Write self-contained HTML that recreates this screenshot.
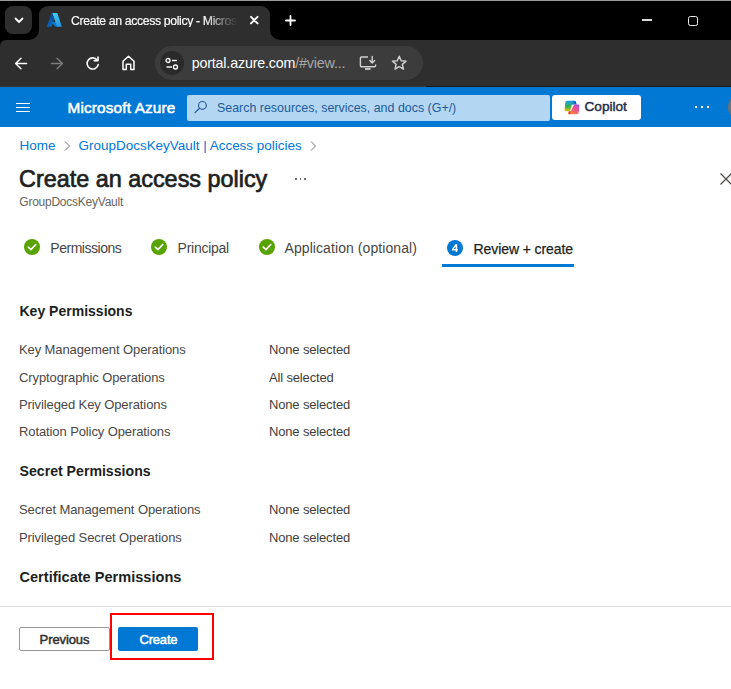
<!DOCTYPE html>
<html>
<head>
<meta charset="utf-8">
<style>
*{margin:0;padding:0;box-sizing:border-box;}
html,body{width:731px;height:689px;overflow:hidden;background:#fff;font-family:"Liberation Sans",sans-serif;}
.a{position:absolute;white-space:nowrap;line-height:1;}
#top{position:absolute;left:0;top:0;width:731px;height:1px;background:#9a9a9a;}
#strip{position:absolute;left:0;top:1px;width:731px;height:50px;background:#000;}
#toolbar{position:absolute;left:0;top:40px;width:731px;height:47px;background:#2e2e2e;border-top-left-radius:6px;}
#azbar{position:absolute;left:0;top:87px;width:731px;height:40px;background:#0078d4;}
</style>
</head>
<body>
<div id="top"></div>
<div id="strip"></div>
<!-- tab dropdown button -->
<div class="a" style="left:5px;top:6px;width:27px;height:28px;border-radius:8px;background:#2e2e2e;"></div>
<svg class="a" style="left:12px;top:14px" width="14" height="12" viewBox="0 0 14 12"><path d="M3.5 4.5 L7 8 L10.5 4.5" fill="none" stroke="#fff" stroke-width="1.8" stroke-linecap="round" stroke-linejoin="round"/></svg>
<!-- active tab -->
<div class="a" style="left:39px;top:6px;width:231px;height:40px;border-radius:9px 9px 0 0;background:#2e2e2e;"></div>
<!-- tab feet -->
<svg class="a" style="left:29px;top:30px" width="10" height="10" viewBox="0 0 10 10"><path d="M0 10 L10 10 L10 0 A10 10 0 0 1 0 10Z" fill="#2e2e2e"/></svg>
<svg class="a" style="left:270px;top:30px" width="10" height="10" viewBox="0 0 10 10"><path d="M0 0 L0 10 L10 10 A10 10 0 0 1 0 0Z" fill="#2e2e2e"/></svg>
<!-- azure logo -->
<svg class="a" style="left:47.3px;top:12.8px" width="14.7" height="13.9" viewBox="4 6.5 88 83">
<defs>
<linearGradient id="az1" x1="42.8" y1="12.7" x2="15.8" y2="92.6" gradientUnits="userSpaceOnUse"><stop offset="0" stop-color="#114a8b"/><stop offset="1" stop-color="#0669bc"/></linearGradient>
<linearGradient id="az3" x1="47.8" y1="10.4" x2="77.5" y2="89.4" gradientUnits="userSpaceOnUse"><stop offset="0" stop-color="#3ccbf4"/><stop offset="1" stop-color="#2892df"/></linearGradient>
</defs>
<path d="M33.338 6.544h26.038l-27.03 80.087a4.152 4.152 0 0 1-3.933 2.824H8.149a4.145 4.145 0 0 1-3.928-5.47L29.404 9.368a4.152 4.152 0 0 1 3.934-2.825z" fill="url(#az1)"/>
<path d="M71.175 60.261h-41.29a1.911 1.911 0 0 0-1.305 3.309l26.532 24.764a4.171 4.171 0 0 0 2.846 1.121h23.38z" fill="#0078d4"/>
<path d="M66.595 9.364a4.145 4.145 0 0 0-3.928-2.82H33.648a4.146 4.146 0 0 1 3.928 2.82l25.184 74.62a4.146 4.146 0 0 1-3.928 5.472h29.02a4.146 4.146 0 0 0 3.927-5.472z" fill="url(#az3)"/>
</svg>
<div class="a" style="left:71px;top:15px;font-size:12.3px;letter-spacing:-0.37px;color:#fff;-webkit-text-stroke:0.15px #fff;width:167px;overflow:hidden;-webkit-mask-image:linear-gradient(to right,#000 80%,rgba(0,0,0,0.35) 92%,transparent 100%);">Create an access policy - Microsoft Azure</div>
<!-- tab close -->
<svg class="a" style="left:248px;top:14px" width="12" height="12" viewBox="0 0 12 12"><path d="M3 2.8 L9.6 9.4 M9.6 2.8 L3 9.4" stroke="#fff" stroke-width="1.9" stroke-linecap="round"/></svg>
<!-- new tab plus -->
<svg class="a" style="left:283.8px;top:13.6px" width="13" height="13" viewBox="0 0 13 13"><path d="M6.5 2 V11 M2 6.5 H11" stroke="#fff" stroke-width="1.8" stroke-linecap="round"/></svg>
<!-- window controls -->
<div class="a" style="left:642px;top:19.2px;width:10px;height:1.6px;background:#d8d8d8;"></div>
<div class="a" style="left:688px;top:15.5px;width:10px;height:10.3px;border:1.5px solid #ececec;border-radius:2.5px;"></div>

<div id="toolbar"></div>
<!-- nav icons -->
<svg class="a" style="left:13px;top:56px" width="16" height="15" viewBox="0 0 16 15"><path d="M13.6 7.5 H2.6 M8 2.3 L2.6 7.5 L8 12.7" fill="none" stroke="#fff" stroke-width="1.5" stroke-linecap="round" stroke-linejoin="round"/></svg>
<svg class="a" style="left:49px;top:56px" width="16" height="15" viewBox="0 0 16 15"><path d="M2.4 7.5 H13.4 M8 2.3 L13.4 7.5 L8 12.7" fill="none" stroke="#7b7b7b" stroke-width="1.5" stroke-linecap="round" stroke-linejoin="round"/></svg>
<svg class="a" style="left:85px;top:56px" width="16" height="15" viewBox="0 0 16 15"><path d="M12.3 4.2 A5.6 5.6 0 1 0 13.2 8.6" fill="none" stroke="#fff" stroke-width="1.6" stroke-linecap="round"/><path d="M9.2 4.6 H13 V1" fill="none" stroke="#fff" stroke-width="1.6" stroke-linecap="round" stroke-linejoin="round"/></svg>
<svg class="a" style="left:121px;top:55px" width="15" height="16" viewBox="0 0 15 16"><path d="M2 6.3 L7.5 1.3 L13 6.3 V14.4 H9.7 V9.2 H5.3 V14.4 H2 Z" fill="none" stroke="#fff" stroke-width="1.5" stroke-linejoin="round"/></svg>
<!-- address pill -->
<div class="a" style="left:155px;top:46px;width:268px;height:34px;border-radius:17px;background:#3c3c3c;"></div>
<div class="a" style="left:160px;top:51px;width:24px;height:24px;border-radius:12px;background:#2a2a2a;"></div>
<svg class="a" style="left:164px;top:55.5px" width="16" height="16" viewBox="0 0 16 16"><circle cx="4" cy="4.5" r="2" fill="none" stroke="#fff" stroke-width="1.3"/><path d="M8 4.5 H13" stroke="#fff" stroke-width="1.4"/><circle cx="11.5" cy="11" r="2" fill="none" stroke="#fff" stroke-width="1.3"/><path d="M2.5 11 H8" stroke="#fff" stroke-width="1.4"/></svg>
<div class="a" style="left:191.7px;top:56px;font-size:14.3px;letter-spacing:-0.18px;color:#fff;">portal.azure.com<span style="color:#a8a8a8">/#view...</span></div>
<svg class="a" style="left:359px;top:55px" width="18" height="16" viewBox="0 0 18 16"><path d="M9 2 H2.6 A1.2 1.2 0 0 0 1.4 3.2 V10.6 A1.2 1.2 0 0 0 2.6 11.8 H15.4 A1.2 1.2 0 0 0 16.6 10.6 V9.6" fill="none" stroke="#d0d0d0" stroke-width="1.4"/><path d="M13.2 1.5 V7.8 M10.8 5.5 L13.2 7.9 L15.6 5.5" fill="none" stroke="#d0d0d0" stroke-width="1.4" stroke-linecap="round" stroke-linejoin="round"/><path d="M6 14 H11.5" stroke="#d0d0d0" stroke-width="1.8"/></svg>
<svg class="a" style="left:391.2px;top:55.4px" width="16.5" height="16.5" viewBox="0 0 16 16"><path d="M8 1.2 L9.9 5.6 L14.6 6 L11 9.1 L12.1 13.8 L8 11.3 L3.9 13.8 L5 9.1 L1.4 6 L6.1 5.6 Z" fill="none" stroke="#d0d0d0" stroke-width="1.4" stroke-linejoin="round"/></svg>

<div class="a" style="left:0;top:86px;width:426px;height:1px;background:#3a3531;"></div>
<div class="a" style="left:426px;top:86px;width:305px;height:1px;background:#1d1a17;"></div>
<div id="azbar"></div>
<div class="a" style="left:16px;top:102.5px;width:14px;height:1.3px;background:#fff;"></div>
<div class="a" style="left:16px;top:106.5px;width:14px;height:1.3px;background:#fff;"></div>
<div class="a" style="left:16px;top:110.5px;width:14px;height:1.3px;background:#fff;"></div>
<div class="a" style="left:67.5px;top:100px;font-size:15.3px;letter-spacing:0.17px;color:#fff;-webkit-text-stroke:0.55px #fff;">Microsoft Azure</div>
<div class="a" style="left:187px;top:95px;width:363px;height:26px;border-radius:2px;background:#b3d7f2;"></div>
<svg class="a" style="left:193px;top:100px" width="15" height="15" viewBox="0 0 15 15"><circle cx="9.4" cy="5.4" r="3.9" fill="none" stroke="#2a5f9c" stroke-width="1.2"/><path d="M6.6 8.2 L2 12.6" stroke="#2a5f9c" stroke-width="1.3" stroke-linecap="round"/></svg>
<div class="a" style="left:217px;top:101.7px;font-size:12.43px;color:#1e5a9c;">Search resources, services, and docs (G+/)</div>
<div class="a" style="left:552px;top:95px;width:89px;height:25px;border-radius:3px;background:#fff;"></div>
<svg class="a" style="left:563.5px;top:99.5px" width="16" height="15" viewBox="0 0 16 15">
<defs><linearGradient id="cp1" x1="0" y1="0" x2="0" y2="1"><stop offset="0" stop-color="#1a9cf0"/><stop offset="0.55" stop-color="#35b34a"/><stop offset="1" stop-color="#f0c000"/></linearGradient>
<linearGradient id="cp2" x1="1" y1="0" x2="0.3" y2="1"><stop offset="0" stop-color="#9a4cf2"/><stop offset="0.45" stop-color="#ea4f94"/><stop offset="1" stop-color="#f98a3c"/></linearGradient>
<linearGradient id="cp3" x1="0" y1="0" x2="1" y2="0"><stop offset="0" stop-color="#1a9cf0" stop-opacity="0"/><stop offset="1" stop-color="#0a3fcf"/></linearGradient></defs>
<path d="M3 0.8 H10.3 Q11.5 0.8 11.9 2 L12.5 4.6 H8 L5.9 11.2 H1.6 Q0.5 11.2 0.6 10 L1.2 3 Q1.5 0.8 3 0.8 Z" fill="url(#cp1)"/>
<path d="M6 0.8 H10.3 Q11.5 0.8 11.9 2 L12.5 4.6 H8 Z" fill="url(#cp3)"/>
<path d="M10.1 4.6 H14.3 Q15.6 4.6 15.4 6 L14.8 12 Q14.5 14.3 12.3 14.3 H5.3 Q4.1 14.3 4.4 13.2 L5.2 11.6 L6.8 11.2 Z" fill="url(#cp2)"/>
<path d="M4.6 11.5 L6.8 11.2 L6 14.3 H5.3 Q4.1 14.3 4.4 13.2 Z" fill="#ef3f24"/>
</svg>
<div class="a" style="left:584.5px;top:100.2px;font-size:13.6px;font-weight:400;color:#1f2d4d;-webkit-text-stroke:0.45px #1f2d4d;">Copilot</div>
<div class="a" style="left:695px;top:106px;width:2.2px;height:2.2px;background:#fff;"></div>
<div class="a" style="left:701px;top:106px;width:2.2px;height:2.2px;background:#fff;"></div>
<div class="a" style="left:707px;top:106px;width:2.2px;height:2.2px;background:#fff;"></div>
<div class="a" style="left:728.2px;top:94px;width:26px;height:26px;border-radius:13px;background:#6f7174;"></div>

<!-- breadcrumb -->
<div class="a" style="left:19.5px;top:139.1px;font-size:13.5px;color:#0078d4;">Home</div>
<svg class="a" style="left:63px;top:140px" width="9" height="12" viewBox="0 0 9 12"><path d="M2 1.5 L6.5 6 L2 10.5" fill="none" stroke="#797775" stroke-width="1"/></svg>
<div class="a" style="left:78.6px;top:139.1px;font-size:13.46px;color:#0078d4;">GroupDocsKeyVault | Access policies</div>
<svg class="a" style="left:309px;top:140px" width="9" height="12" viewBox="0 0 9 12"><path d="M2 1.5 L6.5 6 L2 10.5" fill="none" stroke="#797775" stroke-width="1"/></svg>

<!-- title -->
<div class="a" style="left:19px;top:167.8px;font-size:23.4px;font-weight:400;color:#201f1e;-webkit-text-stroke:0.7px #201f1e;">Create an access policy</div>
<div class="a" style="left:295.2px;top:178.2px;width:1.7px;height:1.7px;background:#6e6c6a;"></div>
<div class="a" style="left:299.6px;top:178.2px;width:1.7px;height:1.7px;background:#6e6c6a;"></div>
<div class="a" style="left:304.2px;top:178.2px;width:1.7px;height:1.7px;background:#6e6c6a;"></div>
<svg class="a" style="left:719px;top:172px" width="14" height="14" viewBox="0 0 14 14"><path d="M1.5 1.5 L12.5 12.5 M12.5 1.5 L1.5 12.5" stroke="#4a4846" stroke-width="1.15"/></svg>
<div class="a" style="left:19.3px;top:196.3px;font-size:12px;letter-spacing:-0.24px;color:#67655f;">GroupDocsKeyVault</div>

<!-- steps -->
<svg class="a" style="left:24px;top:239px" width="16" height="16" viewBox="0 0 16 16"><circle cx="8" cy="8" r="8" fill="#57a300"/><path d="M4.3 8.2 L6.9 10.7 L11.8 5.5" fill="none" stroke="#fff" stroke-width="1.7" stroke-linecap="round" stroke-linejoin="round"/></svg>
<div class="a" style="left:50.3px;top:241.3px;font-size:14px;letter-spacing:-0.47px;color:#484644;">Permissions</div>
<svg class="a" style="left:150.5px;top:239px" width="16" height="16" viewBox="0 0 16 16"><circle cx="8" cy="8" r="8" fill="#57a300"/><path d="M4.3 8.2 L6.9 10.7 L11.8 5.5" fill="none" stroke="#fff" stroke-width="1.7" stroke-linecap="round" stroke-linejoin="round"/></svg>
<div class="a" style="left:177.6px;top:241.3px;font-size:14px;letter-spacing:-0.27px;color:#484644;">Principal</div>
<svg class="a" style="left:258.6px;top:239px" width="16" height="16" viewBox="0 0 16 16"><circle cx="8" cy="8" r="8" fill="#57a300"/><path d="M4.3 8.2 L6.9 10.7 L11.8 5.5" fill="none" stroke="#fff" stroke-width="1.7" stroke-linecap="round" stroke-linejoin="round"/></svg>
<div class="a" style="left:284.5px;top:241.3px;font-size:14px;letter-spacing:0.08px;color:#484644;">Application (optional)</div>
<svg class="a" style="left:447px;top:240px" width="16" height="16" viewBox="0 0 16 16"><circle cx="8" cy="8" r="8" fill="#0078d4"/><path fill-rule="evenodd" d="M8.4 4.2 H10.2 V9.1 H11 V10.4 H10.2 V11.9 H8.7 V10.4 H4.9 V9.2 Z M8.7 6.4 L6.5 9.1 H8.7 Z" fill="#fff"/></svg>
<div class="a" style="left:473.6px;top:241.8px;font-size:14px;letter-spacing:-0.1px;color:#201f1e;-webkit-text-stroke:0.25px #201f1e;">Review + create</div>
<div class="a" style="left:441.5px;top:264.3px;width:132px;height:2.3px;background:#0078d4;"></div>

<!-- key permissions -->
<div class="a" style="left:19.5px;top:304.2px;font-size:14.02px;font-weight:700;color:#201f1e;">Key Permissions</div>
<div class="a" style="left:19px;top:343.4px;font-size:13px;letter-spacing:-0.1px;color:#4a4847;">Key Management Operations</div>
<div class="a" style="left:269px;top:343.4px;font-size:13px;letter-spacing:-0.16px;color:#3f3e3d;">None selected</div>
<div class="a" style="left:19px;top:370.6px;font-size:13px;letter-spacing:-0.1px;color:#4a4847;">Cryptographic Operations</div>
<div class="a" style="left:269px;top:370.6px;font-size:13px;letter-spacing:-0.16px;color:#3f3e3d;">All selected</div>
<div class="a" style="left:19px;top:397.8px;font-size:13px;letter-spacing:-0.1px;color:#4a4847;">Privileged Key Operations</div>
<div class="a" style="left:269px;top:397.8px;font-size:13px;letter-spacing:-0.16px;color:#3f3e3d;">None selected</div>
<div class="a" style="left:19px;top:425.0px;font-size:13px;letter-spacing:-0.1px;color:#4a4847;">Rotation Policy Operations</div>
<div class="a" style="left:269px;top:425.0px;font-size:13px;letter-spacing:-0.16px;color:#3f3e3d;">None selected</div>

<div class="a" style="left:19.5px;top:464.2px;font-size:14.14px;font-weight:700;color:#201f1e;">Secret Permissions</div>
<div class="a" style="left:19px;top:503.2px;font-size:13px;letter-spacing:-0.1px;color:#4a4847;">Secret Management Operations</div>
<div class="a" style="left:269px;top:503.2px;font-size:13px;letter-spacing:-0.16px;color:#3f3e3d;">None selected</div>
<div class="a" style="left:19px;top:530.6px;font-size:13px;letter-spacing:-0.1px;color:#4a4847;">Privileged Secret Operations</div>
<div class="a" style="left:269px;top:530.6px;font-size:13px;letter-spacing:-0.16px;color:#3f3e3d;">None selected</div>

<div class="a" style="left:19.5px;top:570.3px;font-size:14.57px;font-weight:700;color:#201f1e;">Certificate Permissions</div>

<!-- footer -->
<div class="a" style="left:0;top:606px;width:731px;height:1px;background:#e1dfdd;"></div>
<div class="a" style="left:19px;top:627px;width:90.5px;height:24px;border:1px solid #9a9896;border-radius:2px;background:#fff;"></div>
<div class="a" style="left:39.6px;top:633px;font-size:13px;letter-spacing:-0.1px;color:#323130;-webkit-text-stroke:0.5px #323130;">Previous</div>
<div class="a" style="left:118px;top:627px;width:80px;height:24px;border-radius:2px;background:#0078d4;"></div>
<div class="a" style="left:139.5px;top:633px;font-size:13px;letter-spacing:-0.2px;color:#fff;-webkit-text-stroke:0.5px #fff;">Create</div>
<div class="a" style="left:110px;top:613px;width:104px;height:47px;border:2px solid #ff0000;"></div>
</body>
</html>
